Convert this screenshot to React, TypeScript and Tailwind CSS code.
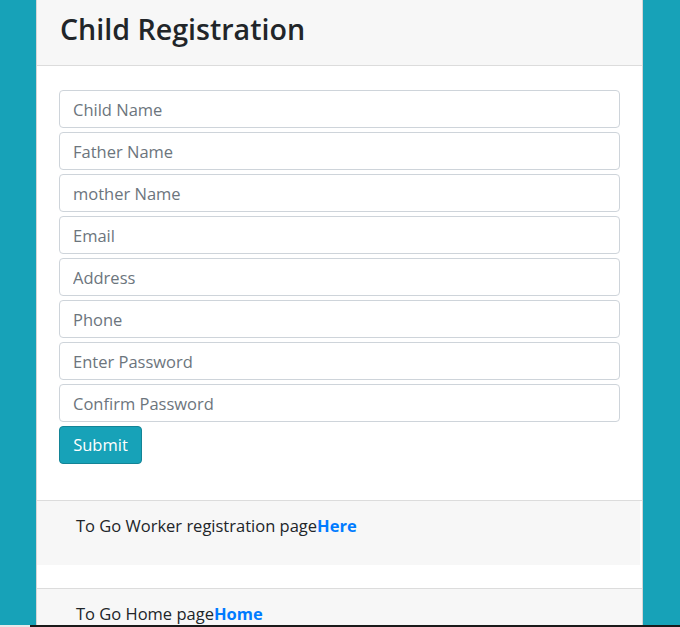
import React from 'react';

const fields = [
  'Child Name',
  'Father Name',
  'mother Name',
  'Email',
  'Address',
  'Phone',
  'Enter Password',
  'Confirm Password',
];

export default function App() {
  return (
    <div className="h-[627px] w-[680px] overflow-hidden bg-[#17a2b8] font-['Open_Sans',sans-serif] text-[#212529] flex flex-col">
      <div className="flex-1 flex min-h-0">
        <div className="ml-[36px] w-[607px] bg-white border-x border-[#d6d6d6] flex flex-col overflow-hidden">
          <div className="shrink-0 h-[66px] bg-[#f7f7f7] border-b border-[#dcdcdc] px-[23px] flex items-center">
            <h1 className="text-[28.6px] font-semibold leading-none -mt-[6px]">Child Registration</h1>
          </div>

          <form className="shrink-0 px-[22px] pt-[24px] pb-[36px] border-b border-[#dcdcdc]" onSubmit={(e) => e.preventDefault()}>
            <div className="flex flex-col gap-[4px]">
              {fields.map((f) => (
                <input
                  key={f}
                  type={f.includes('Password') ? 'password' : 'text'}
                  placeholder={f}
                  className="h-[38px] w-[561px] rounded-[4px] border border-[#ced4da] px-[13px] text-[16.5px] text-[#495057] placeholder:text-[#6c757d] outline-none"
                />
              ))}
            </div>
            <button
              type="submit"
              className="mt-[4px] h-[38px] w-[83px] rounded-[4px] bg-[#17a2b8] border border-[#138496] text-white text-[16.5px]"
            >
              Submit
            </button>
          </form>

          <div className="shrink-0 bg-[#f7f7f7] mr-[2px] pl-[39px] pt-[13px] pb-[27px] text-[16.5px] leading-[24px]">
            To Go Worker registration page<a href="#" className="font-bold text-[#007bff]">Here</a>
          </div>

          <div className="shrink-0 h-[24px] border-b border-[#dcdcdc]" />

          <div className="shrink-0 flex-1 bg-[#f7f7f7] pl-[39px] pt-[13px] text-[16.5px] leading-[24px]">
            To Go Home page<a href="#" className="font-bold text-[#007bff]">Home</a>
          </div>
        </div>
      </div>
      <div className="h-[2px] flex">
        <div className="w-[30px] bg-[#e8e8e8]" />
        <div className="flex-1 bg-[#1a1a1a]" />
      </div>
    </div>
  );
}
